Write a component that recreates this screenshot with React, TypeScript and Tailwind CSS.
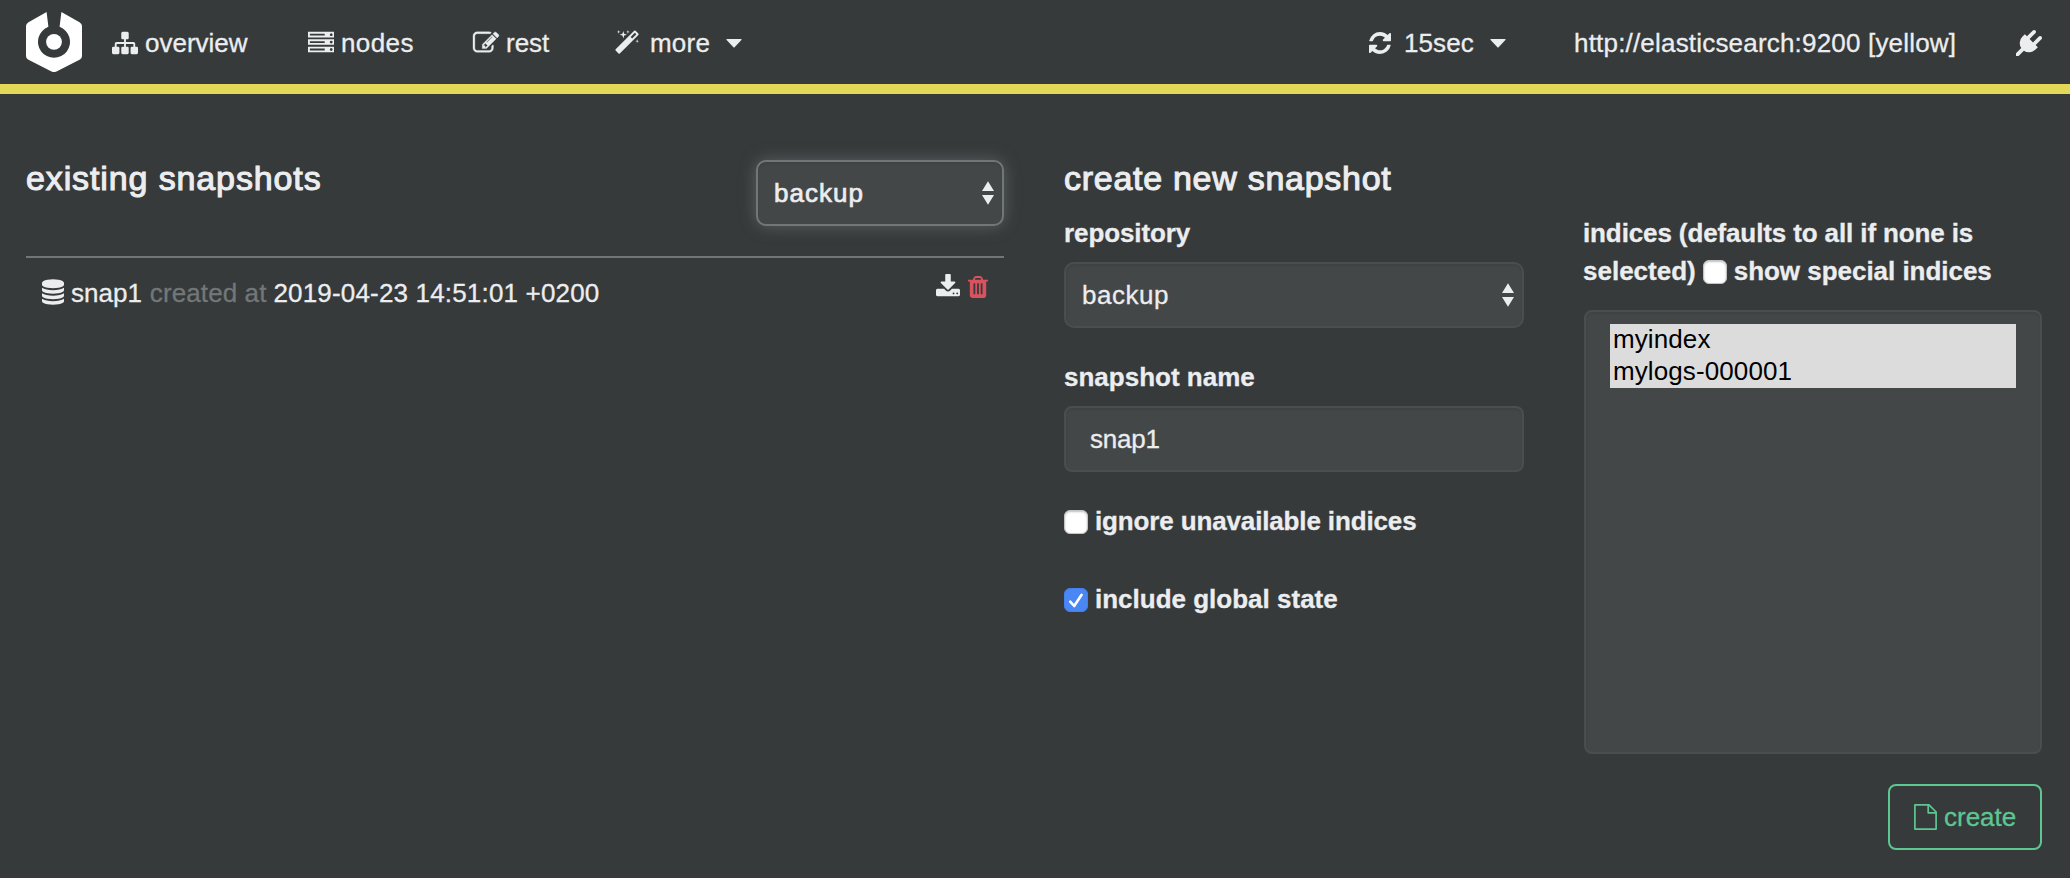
import type { ReactNode } from "react";

const paths = {
  sitemap:
    "M1792 1248v320q0 40-28 68t-68 28h-320q-40 0-68-28t-28-68v-320q0-40 28-68t68-28h96v-192h-512v192h96q40 0 68 28t28 68v320q0 40-28 68t-68 28h-320q-40 0-68-28t-28-68v-320q0-40 28-68t68-28h96v-192h-512v192h96q40 0 68 28t28 68v320q0 40-28 68t-68 28h-320q-40 0-68-28t-28-68v-320q0-40 28-68t68-28h96v-192q0-52 38-90t90-38h512v-192h-96q-40 0-68-28t-28-68v-320q0-40 28-68t68-28h320q40 0 68 28t28 68v320q0 40-28 68t-68 28h-96v192h512q52 0 90 38t38 90v192h96q40 0 68 28t28 68z",
  server:
    "M128 1408h1024v-128h-1024v128zm0-512h1024v-128h-1024v128zm1568 448q0-40-28-68t-68-28-68 28-28 68 28 68 68 28 68-28 28-68zm-1568-960h1024v-128h-1024v128zm1568 448q0-40-28-68t-68-28-68 28-28 68 28 68 68 28 68-28 28-68zm0-512q0-40-28-68t-68-28-68 28-28 68 28 68 68 28 68-28 28-68zm96 832v384h-1792v-384h1792zm0-512v384h-1792v-384h1792zm0-512v384h-1792v-384h1792z",
  edit: "M888 1184l116-116-152-152-116 116v56h96v96h56zm440-720q-16-16-33 1l-350 350q-17 17-1 33t33-1l350-350q17-17 1-33zm80 594v190q0 119-84.5 203.5t-203.5 84.5h-832q-119 0-203.5-84.5t-84.5-203.5v-832q0-119 84.5-203.5t203.5-84.5h832q63 0 117 25 15 7 18 23 3 17-9 29l-49 49q-14 14-32 8-23-6-45-6h-832q-66 0-113 47t-47 113v832q0 66 47 113t113 47h832q66 0 113-47t47-113v-126q0-13 9-22l64-64q15-15 35-7t20 29zm-96-738l288 288-672 672h-288v-288zm444 132l-92 92-288-288 92-92q28-28 68-28t68 28l152 152q28 28 28 68t-28 68z",
  magic:
    "M1254 581l293-293-107-107-293 293zm447-293q0 27-18 45l-1286 1286q-18 18-45 18t-45-18l-198-198q-18-18-18-45t18-45l1286-1286q18-18 45-18t45 18l198 198q18 18 18 45zm-1351-190l98 30-98 30-30 98-30-98-98-30 98-30 30-98zm350 162l196 60-196 60-60 196-60-196-196-60 196-60 60-196zm930 478l98 30-98 30-30 98-30-98-98-30 98-30 30-98zm-640-640l98 30-98 30-30 98-30-98-98-30 98-30 30-98z",
  refresh:
    "M1639 1056q0 5-1 7-64 268-268 434.5t-478 166.5q-146 0-282.5-55t-243.5-157l-129 129q-19 19-45 19t-45-19-19-45v-448q0-26 19-45t45-19h448q26 0 45 19t19 45-19 45l-137 137q71 66 161 102t187 36q134 0 250-65t186-179q11-17 53-117 8-23 30-23h192q13 0 22.5 9.5t9.5 22.5zm25-800v448q0 26-19 45t-45 19h-448q-26 0-45-19t-19-45 19-45l138-138q-148-137-349-137-134 0-250 65t-186 179q-11 17-53 117-8 23-30 23h-199q-13 0-22.5-9.5t-9.5-22.5v-7q65-268 270-434.5t480-166.5q146 0 284 55.5t245 156.5l130-129q19-19 45-19t45 19 19 45z",
  database:
    "M896 768q237 0 443-43t325-127v170q0 69-103 128t-280 93.5-385 34.5-385-34.5-280-93.5-103-128v-170q119 84 325 127t443 43zm0 768q237 0 443-43t325-127v170q0 69-103 128t-280 93.5-385 34.5-385-34.5-280-93.5-103-128v-170q119 84 325 127t443 43zm0-384q237 0 443-43t325-127v170q0 69-103 128t-280 93.5-385 34.5-385-34.5-280-93.5-103-128v-170q119 84 325 127t443 43zm0-1152q208 0 385 34.5t280 93.5 103 128v128q0 69-103 128t-280 93.5-385 34.5-385-34.5-280-93.5-103-128v-128q0-69 103-128t280-93.5 385-34.5z",
  plug: "M1755 453q37 38 37 90.5t-37 90.5l-401 400 150 150-160 160q-163 163-389.5 186.5t-411.5-100.5l-362 362h-181v-181l362-362q-124-185-100.5-411.5t186.5-389.5l160-160 150 150 400-401q38-37 91-37t90 37 37 90.5-37 90.5l-400 401 234 234 401-400q38-37 91-37t90 37z",
  download:
    "M1344 1344q0-26-19-45t-45-19-45 19-19 45 19 45 45 19 45-19 19-45zm256 0q0-26-19-45t-45-19-45 19-19 45 19 45 45 19 45-19 19-45zm128-224v320q0 40-28 68t-68 28h-1472q-40 0-68-28t-28-68v-320q0-40 28-68t68-28h465l135 136q58 56 136 56t136-56l136-136h464q40 0 68 28t28 68zm-325-569q17 41-14 70l-448 448q-18 19-45 19t-45-19l-448-448q-31-29-14-70 17-39 59-39h256v-448q0-26 19-45t45-19h256q26 0 45 19t19 45v448h256q42 0 59 39z",
  trash:
    "M704 1376v-704q0-14-9-23t-23-9h-64q-14 0-23 9t-9 23v704q0 14 9 23t23 9h64q14 0 23-9t9-23zm256 0v-704q0-14-9-23t-23-9h-64q-14 0-23 9t-9 23v704q0 14 9 23t23 9h64q14 0 23-9t9-23zm256 0v-704q0-14-9-23t-23-9h-64q-14 0-23 9t-9 23v704q0 14 9 23t23 9h64q14 0 23-9t9-23zm-544-992h448l-48-117q-7-9-17-11h-317q-10 2-17 11zm928 32v64q0 14-9 23t-23 9h-96v948q0 83-47 143.5t-113 60.5h-832q-66 0-113-58.5t-47-141.5v-952h-96q-14 0-23-9t-9-23v-64q0-14 9-23t23-9h309l70-167q15-37 54-63t79-26h320q40 0 79 26t54 63l70 167h309q14 0 23 9t9 23z",
};

/* Icons share a 1792-unit em square; x and w crop it to the glyph's own width. */
function Icon({ name, x = 0, w = 1792, className = "" }: { name: keyof typeof paths; x?: number; w?: number; className?: string }) {
  return (
    <svg viewBox={`${x} 0 ${w} 1792`} fill="currentColor" className={`h-[26px] shrink-0 overflow-visible ${className}`}>
      <path d={paths[name]} />
    </svg>
  );
}

function Caret({ className }: { className: string }) {
  return (
    <svg viewBox="0 0 16 9" fill="currentColor" className={`h-[9px] w-4 ${className}`}>
      <path d="M1 0h14q1 0 .4.9L8.6 8.3q-.6.6-1.2 0L.6.9Q0 0 1 0z" />
    </svg>
  );
}

function Logo() {
  return (
    <svg viewBox="0 0 56 60" fill="#fff" className="h-[60px] w-14 shrink-0">
      <path d="M20.6 0L22.4 14.8A16 16 0 1 0 33.6 14.8L35.4 0L53.5 10.2Q56 11.8 56 14V44Q56 46.4 54 47.6L31 59.3Q28 60.8 25 59.3L2 47.6Q0 46.4 0 44V14Q0 11.8 2.5 10.2Z" />
      <circle cx="28" cy="29.8" r="7.9" />
    </svg>
  );
}

function Select({ value, focused = false }: { value: string; focused?: boolean }) {
  return (
    <button
      className={`flex h-[66px] w-full items-center justify-between rounded-[10px] border-2 bg-[#444748] pr-2 pl-4 ${
        focused
          ? "border-[#717677] shadow-[inset_0_2px_2px_rgba(0,0,0,0.08),0_0_16px_rgba(130,135,140,0.5)]"
          : "border-[#4b4d4f] shadow-[inset_0_2px_2px_rgba(0,0,0,0.08)]"
      }`}
    >
      <span className={focused ? "tracking-[1px] [-webkit-text-stroke:0.7px_currentColor]" : "tracking-[0.5px]"}>{value}</span>
      <svg viewBox="0 0 12 24" fill="currentColor" className="h-6 w-3">
        <path d="M6 .3L12 10H0zM6 23.7L12 14H0z" />
      </svg>
    </button>
  );
}

function Checkbox({ checked = false, className = "" }: { checked?: boolean; className?: string }) {
  return (
    <span
      role="checkbox"
      aria-checked={checked}
      className={`inline-block size-6 shrink-0 rounded-[6px] border ${
        checked ? "border-[#447fee] bg-[#4a86f4]" : "border-[#c4c4c4] bg-white shadow-[inset_0_1px_2px_rgba(0,0,0,0.25)]"
      } ${className}`}
    >
      {checked && (
        <svg viewBox="0 0 22 22" fill="none" stroke="#fff" strokeWidth="2.6" strokeLinecap="round" strokeLinejoin="round" className="size-[22px]">
          <path d="M5.2 12.6L9.2 17L16.6 5.8" />
        </svg>
      )}
    </span>
  );
}

function Heading({ children, className = "" }: { children: ReactNode; className?: string }) {
  return (
    <h4 className={`-mt-px text-[34px] leading-[38px] whitespace-nowrap [-webkit-text-stroke:1.1px_currentColor] ${className}`}>{children}</h4>
  );
}

export default function App() {
  return (
    <div className="h-[878px] w-full overflow-hidden bg-[#363a3b] font-['Liberation_Sans',Arial,sans-serif] text-[26px] leading-[38px] text-[#ecedef] [-webkit-text-stroke:0.3px_currentColor]">
      <nav className="flex h-[94px] items-center border-b-[10px] border-[#e3d757] pr-7 pl-[26px] whitespace-nowrap">
        <Logo />
        <a className="ml-[30px] flex w-[196px] items-center pt-0.5">
          <Icon name="sitemap" className="mr-[7px] w-[26px]" />
          <span>overview</span>
        </a>
        <a className="flex w-[165px] items-center pt-0.5">
          <Icon name="server" className="mr-[7px] w-[26px]" />
          <span className="tracking-[0.4px]">nodes</span>
        </a>
        <a className="flex w-[142px] items-center pt-0.5">
          <Icon name="edit" className="mr-[7px] w-[26px] stroke-current [stroke-width:24]" />
          rest
        </a>
        <a className="flex items-center pt-0.5">
          <Icon name="magic" x={64} w={1664} className="mr-[11px] w-6" />
          <span className="tracking-[0.2px]">more</span>
          <Caret className="ml-4" />
        </a>
        <a className="ml-auto flex w-[206px] items-center pt-0.5">
          <Icon name="refresh" x={128} w={1536} className="mr-[13px] ml-px w-[22px]" />
          <span className="tracking-[0.1px]">15sec</span>
          <Caret className="ml-4" />
        </a>
        <span className="w-[442px] pt-0.5 tracking-[0.19px]">http://elasticsearch:9200 [yellow]</span>
        <Icon name="plug" className="mt-0.5 w-[26px]" />
      </nav>

      <main className="flex pr-7 pl-[26px]">
        <section className="w-[978px] pt-[66px]">
          <header className="flex h-[98px] items-start justify-between border-b-2 border-[#717677]">
            <Heading className="tracking-[0.88px]">existing snapshots</Heading>
            <div className="w-[248px]">
              <Select value="backup" focused />
            </div>
          </header>
          <div className="flex items-start px-4 pt-4">
            <Icon name="database" x={128} w={1536} className="mt-[5px] mr-[7px] w-[22px]" />
            <span>snap1</span>
            <span className="ml-[8px] tracking-[0.1px] text-[#737778]">created at</span>
            <span className="ml-[7px] tracking-[0.17px]">2019-04-23 14:51:01 +0200</span>
            <span className="ml-auto flex">
              <Icon name="download" x={64} w={1664} className="mr-2 w-6" />
              <Icon name="trash" x={192} w={1408} className="w-5 text-[#d9535f]" />
            </span>
          </div>
        </section>

        <section className="ml-[60px] w-[978px] pt-[66px]">
          <Heading className="tracking-[0.72px]">create new snapshot</Heading>
          <div className="mt-[17px] flex justify-between">
            <div className="w-[460px]">
              <label className="block font-bold tracking-[-0.1px]">repository</label>
              <div className="mt-2.5">
                <Select value="backup" />
              </div>
              <label className="mt-[30px] block font-bold">snapshot name</label>
              <input
                defaultValue="snap1"
                className="mt-2.5 block h-[66px] w-full rounded-[8px] border-2 border-[#4b4d4f] bg-[#444748] px-6 tracking-[-0.2px] shadow-[inset_0_2px_2px_rgba(0,0,0,0.08)]"
              />
              <label className="mt-[30px] flex items-center font-bold tracking-[-0.14px]">
                <Checkbox checked={false} className="mt-0.5 mr-[7px]" />
                ignore unavailable indices
              </label>
              <label className="mt-10 flex items-center font-bold">
                <Checkbox checked className="mt-0.5 mr-[7px]" />
                include global state
              </label>
            </div>
            <div className="flex w-[459px] flex-col items-end">
              <label className="w-full font-bold whitespace-nowrap">
                <span className="block tracking-[-0.12px]">indices (defaults to all if none is</span>
                <span className="flex items-center">
                  selected)
                  <Checkbox className="mt-0.5 mr-[7px] ml-[7px]" />
                  <span className="tracking-[-0.03px]">show special indices</span>
                </span>
              </label>
              <div className="mt-5 h-[444px] w-[458px] rounded-[8px] border-2 border-[#4b4d4f] bg-[#444748] px-6 py-3 shadow-[inset_0_2px_2px_rgba(0,0,0,0.08)]">
                <ul className="h-16 bg-[#dcdcdc] px-[3px] text-black [-webkit-text-stroke:0px]">
                  <li className="h-8 leading-[30px] tracking-[0.1px]">myindex</li>
                  <li className="h-8 leading-[30px] tracking-[0.1px]">mylogs-000001</li>
                </ul>
              </div>
              <button className="mt-[30px] flex h-[66px] w-[154px] items-center rounded-[8px] border-2 border-[#5dc693] pl-6 text-[#5dc693]">
                <svg viewBox="0 0 23 26" fill="none" stroke="currentColor" strokeWidth="1.7" strokeLinejoin="round" className="mr-[7px] h-[26px] w-[23px]">
                  <path d="M.9 .9H15L22.1 8V25.1H.9zM14.2 .9V8.8H22.1" />
                </svg>
                create
              </button>
            </div>
          </div>
        </section>
      </main>
    </div>
  );
}
